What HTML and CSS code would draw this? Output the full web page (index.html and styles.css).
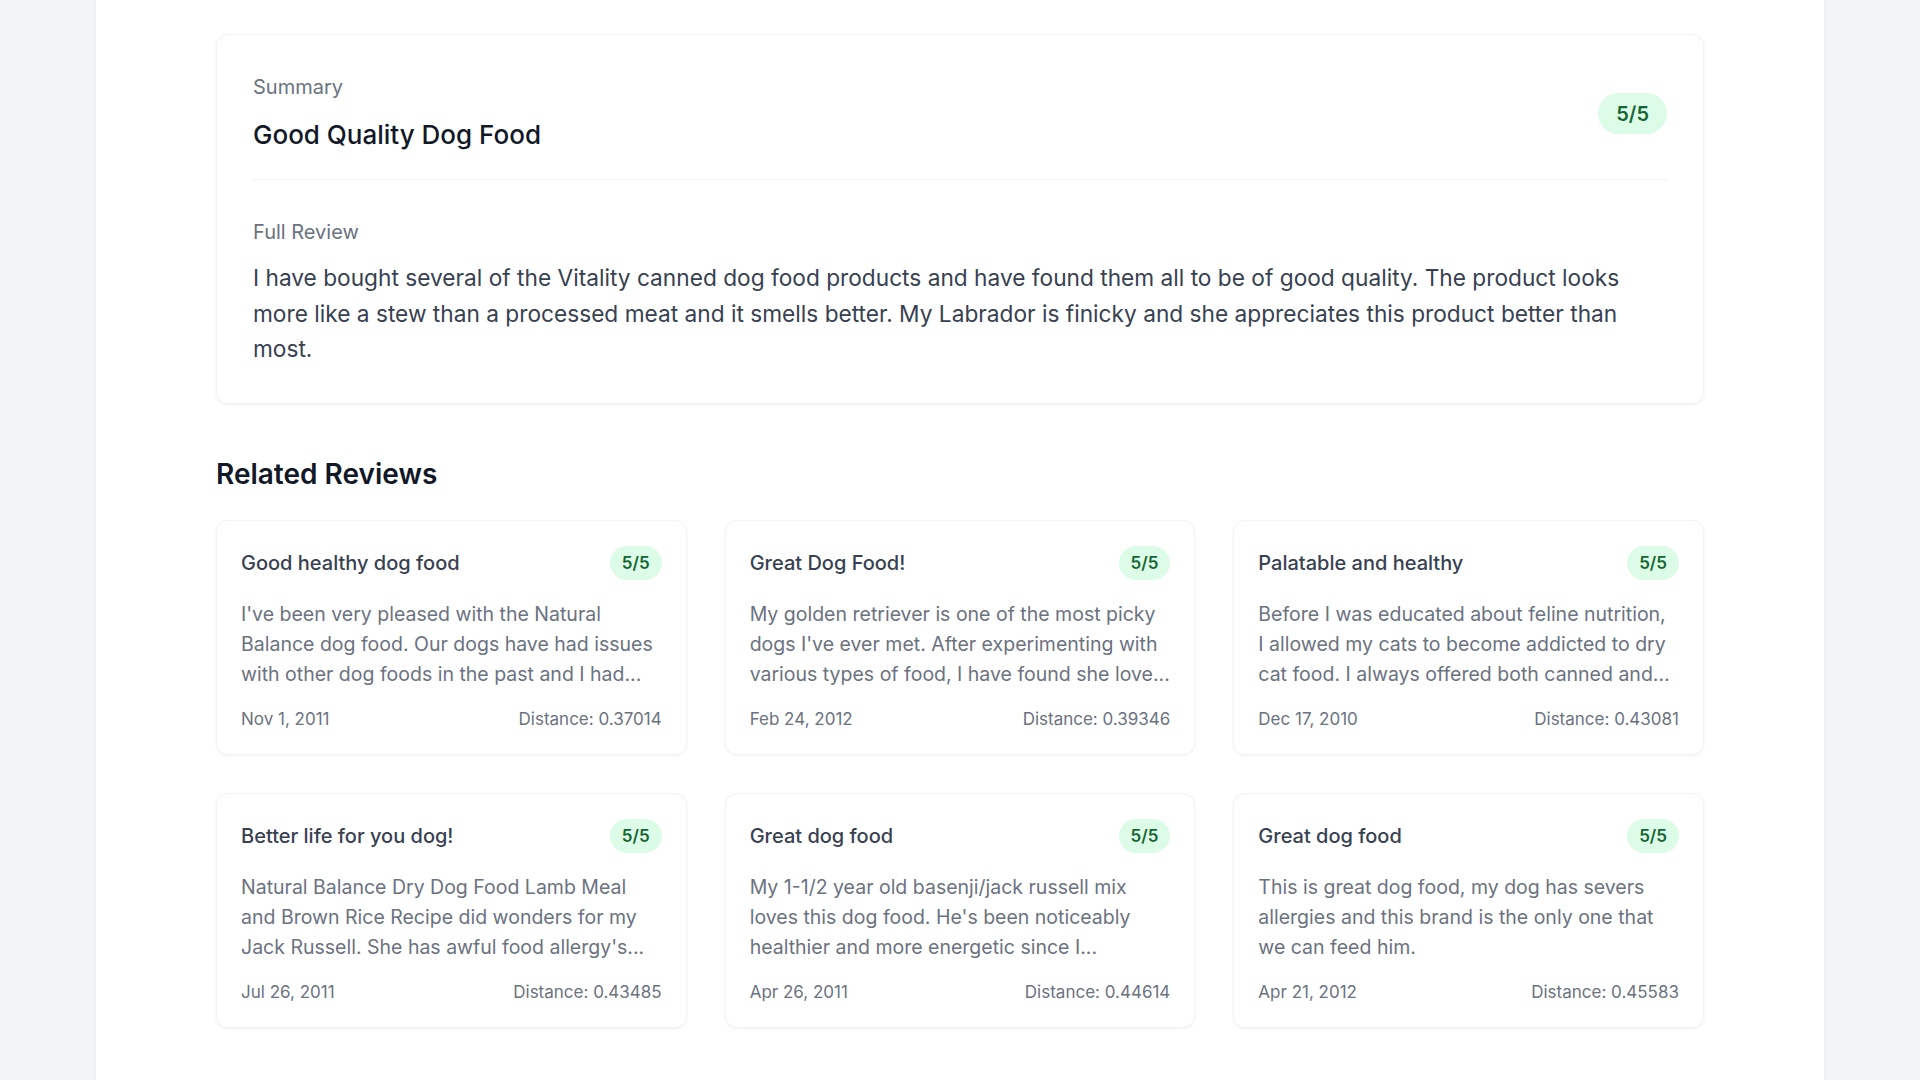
FILE: index.html
```html
<!DOCTYPE html>
<html lang="en">
<head>
<meta charset="utf-8">
<title>Review Detail</title>
<link rel="stylesheet" href="styles.css">
</head>
<body>
<div class="panel">
  <main class="content">
    <section class="summary-card">
      <div class="summary-head">
        <div class="summary-titles">
          <div class="label">Summary</div>
          <h1 class="summary-title">Good Quality Dog Food</h1>
        </div>
        <span class="badge badge-lg">5/5</span>
      </div>
      <div class="summary-body">
        <div class="label">Full Review</div>
        <p class="full-text">I have bought several of the Vitality canned dog food products and have found them all to be of good quality. The product looks more like a stew than a processed meat and it smells better. My Labrador is finicky and she appreciates this product better than most.</p>
      </div>
    </section>

    <h2 class="section-title">Related Reviews</h2>

    <div class="grid">
      <article class="card">
        <div class="card-head"><h3 class="card-title">Good healthy dog food</h3><span class="badge">5/5</span></div>
        <p class="card-text">I've been very pleased with the Natural Balance dog food. Our dogs have had issues with other dog foods in the past and I had...</p>
        <div class="card-foot"><span>Nov 1, 2011</span><span>Distance: 0.37014</span></div>
      </article>
      <article class="card">
        <div class="card-head"><h3 class="card-title">Great Dog Food!</h3><span class="badge">5/5</span></div>
        <p class="card-text">My golden retriever is one of the most picky dogs I've ever met. After experimenting with various types of food, I have found she love...</p>
        <div class="card-foot"><span>Feb 24, 2012</span><span>Distance: 0.39346</span></div>
      </article>
      <article class="card">
        <div class="card-head"><h3 class="card-title">Palatable and healthy</h3><span class="badge">5/5</span></div>
        <p class="card-text">Before I was educated about feline nutrition,<br>I allowed my cats to become addicted to dry cat food. I always offered both canned and...</p>
        <div class="card-foot"><span>Dec 17, 2010</span><span>Distance: 0.43081</span></div>
      </article>
      <article class="card">
        <div class="card-head"><h3 class="card-title">Better life for you dog!</h3><span class="badge">5/5</span></div>
        <p class="card-text">Natural Balance Dry Dog Food Lamb Meal and Brown Rice Recipe did wonders for my Jack Russell. She has awful food allergy's...</p>
        <div class="card-foot"><span>Jul 26, 2011</span><span>Distance: 0.43485</span></div>
      </article>
      <article class="card">
        <div class="card-head"><h3 class="card-title">Great dog food</h3><span class="badge">5/5</span></div>
        <p class="card-text">My 1-1/2 year old basenji/jack russell mix loves this dog food. He's been noticeably healthier and more energetic since I...</p>
        <div class="card-foot"><span>Apr 26, 2011</span><span>Distance: 0.44614</span></div>
      </article>
      <article class="card">
        <div class="card-head"><h3 class="card-title">Great dog food</h3><span class="badge">5/5</span></div>
        <p class="card-text">This is great dog food, my dog has severs allergies and this brand is the only one that we can feed him.</p>
        <div class="card-foot"><span>Apr 21, 2012</span><span>Distance: 0.45583</span></div>
      </article>
    </div>
  </main>
</div>
</body>
</html>
```
FILE: styles.css
```css
* { box-sizing: border-box; }
html, body { margin: 0; padding: 0; }
body {
  background: #f3f4f6;
  font-family: Inter, "Noto Sans", "Liberation Sans", sans-serif;
  color: #111827;
  height: 1080px;
  overflow: hidden;
}
.panel {
  margin: 0 96px;
  background: #ffffff;
  min-height: 1080px;
  box-shadow: 0 0 2px rgba(0,0,0,0.06);
}
.content {
  width: 1488px;
  margin: 0 auto;
  padding-top: 34px;
}
.summary-card {
  background: #fff;
  border: 1px solid #f3f4f6;
  border-radius: 12px;
  box-shadow: 0 1px 3px rgba(0,0,0,0.05);
  padding: 36px;
}
.summary-head {
  display: flex;
  align-items: center;
  justify-content: space-between;
  padding-top: 2px;
  padding-bottom: 28px;
  border-bottom: 1px solid #f3f4f6;
}
.label {
  font-size: 20px;
  line-height: 28px;
  color: #6b7280;
}
.summary-title {
  margin: 18px 0 0;
  font-size: 26px;
  line-height: 32px;
  font-weight: 500;
  color: #111827;
}
.summary-body { padding-top: 38px; }
.full-text {
  margin: 14px 0 0;
  font-size: 22.7px;
  line-height: 35.5px;
  color: #374151;
}
.badge {
  display: inline-block;
  background: #dcfce7;
  color: #166534;
  font-weight: 600;
  font-size: 17px;
  line-height: 24px;
  padding: 5px 12px;
  border-radius: 999px;
  flex-shrink: 0;
}
.badge-lg {
  font-size: 20px;
  line-height: 28px;
  padding: 7px 18px 6px;
  margin-top: 2px;
}
.section-title {
  margin: 52px 0 28px;
  font-size: 28px;
  line-height: 36px;
  font-weight: 600;
  color: #111827;
}
.grid {
  display: grid;
  grid-template-columns: repeat(3, 1fr);
  column-gap: 38px;
  row-gap: 38px;
}
.card {
  background: #fff;
  border: 1px solid #f3f4f6;
  border-radius: 12px;
  box-shadow: 0 1px 3px rgba(0,0,0,0.05);
  padding: 25px 24px 23px;
}
.card-head {
  display: flex;
  align-items: center;
  justify-content: space-between;
  gap: 12px;
}
.card-title {
  margin: 0;
  font-size: 20px;
  line-height: 28px;
  font-weight: 500;
  color: #374151;
}
.card-text {
  margin: 19px 0 0;
  font-size: 19.5px;
  line-height: 30px;
  color: #6b7280;
  display: -webkit-box;
  -webkit-line-clamp: 3;
  -webkit-box-orient: vertical;
  overflow: hidden;
  min-height: 90px;
}
.card-foot {
  margin-top: 18px;
  display: flex;
  justify-content: space-between;
  font-size: 17px;
  line-height: 24px;
  color: #6b7280;
}
```
